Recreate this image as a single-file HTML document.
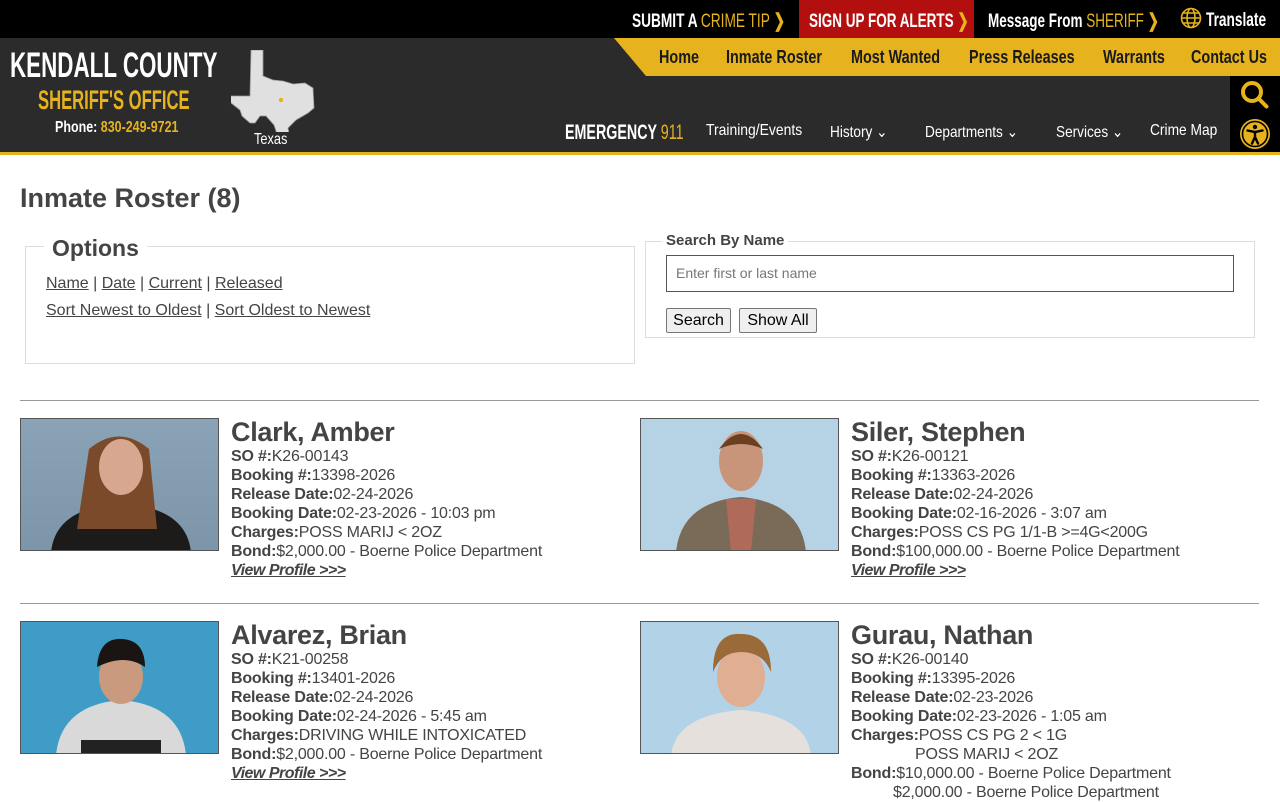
<!DOCTYPE html>
<html><head><meta charset="utf-8"><style>
*{margin:0;padding:0;box-sizing:border-box}
body{width:1280px;height:800px;overflow:hidden;background:#fff;font-family:"Liberation Sans",Arial,sans-serif;color:#444;position:relative}
.a{position:absolute;white-space:nowrap}
.c{display:inline-block;transform-origin:0 50%;font-weight:bold}
.y{color:#e6b31e}
.ent{position:absolute;width:560px}
.ent .ph{position:absolute;left:0;top:0;width:199px;height:133px;border:1px solid #555;overflow:hidden}
.ent .tx{position:absolute;left:211px;top:0;font-size:16px;line-height:19px;letter-spacing:-0.2px}
.ent h2{font-size:27px;line-height:30px;font-weight:bold;color:#444;margin-top:-1px;letter-spacing:-0.3px}
.ent b{font-weight:bold}
.ent a{font-weight:bold;font-style:italic;text-decoration:underline;color:#444;letter-spacing:-0.5px}
hr{position:absolute;left:20px;width:1239px;border:0;border-top:1px solid #999}
</style></head><body>
<!-- top bar -->
<div class="a" style="left:0;top:0;width:1280px;height:38px;background:#000"></div>
<div class="a" style="left:799px;top:0;width:175px;height:38px;background:#b40f0f"></div>
<div class="a" style="left:632px;top:10px;font-size:19px;color:#fff"><span class="c" style="transform:scaleX(.72)">SUBMIT A <span class="y" style="font-weight:normal">CRIME TIP</span> <span class="y">❯</span></span></div>
<div class="a" style="left:809px;top:10px;font-size:19px;color:#fff"><span class="c" style="transform:scaleX(.71)">SIGN UP FOR ALERTS <span class="y">❯</span></span></div>
<div class="a" style="left:988px;top:10px;font-size:19px;color:#fff"><span class="c" style="transform:scaleX(.71)">Message From <span class="y" style="font-weight:normal">SHERIFF</span> <span class="y">❯</span></span></div>
<svg class="a" style="left:1179px;top:7px" width="24" height="24" viewBox="0 0 24 24" fill="none" stroke="#e6b31e" stroke-width="1.6"><circle cx="12" cy="11" r="9.5"/><ellipse cx="12" cy="11" rx="4" ry="9.5"/><path d="M2.5 11h19M4 6h16M4 16h16"/></svg>
<div class="a" style="left:1206px;top:10px;font-size:19px;color:#fff"><span class="c" style="transform:scaleX(.72)">Translate</span></div>
<!-- header -->
<div class="a" style="left:0;top:38px;width:1280px;height:114px;background:#2b2b2b"></div>
<div class="a" style="left:0;top:152px;width:1280px;height:3px;background:#e6b31e"></div>
<svg class="a" style="left:614px;top:38px" width="666" height="38"><polygon points="0,0 666,0 666,38 32,38" fill="#e6b31e"/></svg>
<div class="a" style="left:1230px;top:76px;width:50px;height:76px;background:#000"></div>
<svg class="a" style="left:1240px;top:80px" width="30" height="30" viewBox="0 0 30 30" fill="none" stroke="#e6b31e" stroke-width="4"><circle cx="12" cy="12" r="9"/><path d="M18.5 18.5l8 8" stroke-linecap="round"/></svg>
<svg class="a" style="left:1239px;top:118px" width="32" height="32" viewBox="0 0 32 32"><circle cx="16" cy="16" r="15" fill="#e6b31e"/><circle cx="16" cy="16" r="12.5" fill="none" stroke="#000" stroke-width="1.6"/><circle cx="16" cy="9" r="2.2" fill="#000"/><path d="M8.5 12.5l7.5 1.5 7.5-1.5M16 14v5l-3 6.5M16 19l3 6.5" stroke="#000" stroke-width="2.4" fill="none" stroke-linecap="round"/></svg>
<!-- gold nav -->
<div class="a" style="left:659px;top:47px;font-size:18px;color:#1a1a1a"><span class="c" style="transform:scaleX(.8)">Home</span></div>
<div class="a" style="left:726px;top:47px;font-size:18px;color:#1a1a1a"><span class="c" style="transform:scaleX(.8)">Inmate Roster</span></div>
<div class="a" style="left:851px;top:47px;font-size:18px;color:#1a1a1a"><span class="c" style="transform:scaleX(.8)">Most Wanted</span></div>
<div class="a" style="left:969px;top:47px;font-size:18px;color:#1a1a1a"><span class="c" style="transform:scaleX(.8)">Press Releases</span></div>
<div class="a" style="left:1103px;top:47px;font-size:18px;color:#1a1a1a"><span class="c" style="transform:scaleX(.8)">Warrants</span></div>
<div class="a" style="left:1191px;top:47px;font-size:18px;color:#1a1a1a"><span class="c" style="transform:scaleX(.8)">Contact Us</span></div>
<!-- second nav -->
<div class="a" style="left:565px;top:121px;font-size:21px;color:#fff"><span class="c" style="transform:scaleX(.68)">EMERGENCY <span class="y" style="font-weight:normal">911</span></span></div>
<div class="a" style="left:706px;top:122px;font-size:16px;color:#fff"><span class="c" style="transform:scaleX(.87);font-weight:normal">Training/Events</span></div>
<div class="a" style="left:830px;top:122px;font-size:16px;color:#fff"><span class="c" style="transform:scaleX(.85);font-weight:normal">History ⌄</span></div>
<div class="a" style="left:925px;top:122px;font-size:16px;color:#fff"><span class="c" style="transform:scaleX(.85);font-weight:normal">Departments ⌄</span></div>
<div class="a" style="left:1056px;top:122px;font-size:16px;color:#fff"><span class="c" style="transform:scaleX(.85);font-weight:normal">Services ⌄</span></div>
<div class="a" style="left:1150px;top:122px;font-size:16px;color:#fff"><span class="c" style="transform:scaleX(.86);font-weight:normal">Crime Map</span></div>
<!-- logo -->
<div class="a" style="left:10px;top:46px;font-size:35px;color:#fff"><span class="c" style="transform:scaleX(.64)">KENDALL COUNTY</span></div>
<div class="a" style="left:38px;top:85px;font-size:27px;color:#e6b31e"><span class="c" style="transform:scaleX(.615)">SHERIFF'S OFFICE</span></div>
<div class="a" style="left:55px;top:119px;font-size:16px;color:#fff"><span class="c" style="transform:scaleX(.78)">Phone: <span class="y">830-249-9721</span></span></div>
<svg class="a" style="left:231px;top:50px" width="84" height="82" viewBox="0 0 84 82"><path d="M20 0h12v26l10 4 10 1 10 3 12-1 8 5 1 20-6 5-12 7-8 8 2 11-6 1-7-6-3-9-8-9-6 0-5 7-5 0-8-7-2-6-9-7-4-7h23z" fill="#e0e0e0" stroke="#999" stroke-width=".8"/><circle cx="50" cy="50" r="2.2" fill="#e6b31e"/></svg>
<div class="a" style="left:254px;top:131px;font-size:16px;color:#fff"><span class="c" style="transform:scaleX(.8);font-weight:normal">Texas</span></div>
<!-- content -->
<div class="a" style="left:20px;top:183px;font-size:27px;font-weight:bold;color:#444">Inmate Roster (8)</div>
<div class="a" style="left:25px;top:246px;width:610px;height:118px;border:1px solid #ddd"></div>
<div class="a" style="left:44px;top:235px;background:#fff;padding:0 8px;font-size:23px;font-weight:bold;color:#444">Options</div>
<div class="a" style="left:46px;top:275px;font-size:16px;color:#444"><u>Name</u> | <u>Date</u> | <u>Current</u> | <u>Released</u></div>
<div class="a" style="left:46px;top:302px;font-size:16px;color:#444"><u>Sort Newest to Oldest</u> | <u>Sort Oldest to Newest</u></div>
<div class="a" style="left:645px;top:241px;width:610px;height:97px;border:1px solid #ddd"></div>
<div class="a" style="left:662px;top:232px;background:#fff;padding:0 4px;font-size:15px;font-weight:bold;color:#444">Search By Name</div>
<div class="a" style="left:666px;top:255px;width:568px;height:37px;border:1px solid #555;font-size:14px;color:#777;padding:9px 9px">Enter first or last name</div>
<div class="a" style="left:666px;top:308px;width:65px;height:25px;border:1px solid #777;border-radius:2px;background:#efefef;font-size:16px;color:#000;text-align:center;line-height:23px">Search</div>
<div class="a" style="left:739px;top:308px;width:78px;height:25px;border:1px solid #777;border-radius:2px;background:#efefef;font-size:16px;color:#000;text-align:center;line-height:23px">Show All</div>
<hr style="top:400px"><hr style="top:603px">

<div class="ent" style="left:20px;top:418px">
<div class="ph" style="background:linear-gradient(#8aa3b6,#7c95a8)"><svg width="199" height="133"><path d="M30 133q5-45 70-48q65 3 70 48z" fill="#1d1a1a"/><path d="M68 30q30-25 60 0l8 80h-80z" fill="#7a4a2a"/><ellipse cx="100" cy="48" rx="22" ry="28" fill="#d7a88f"/></svg></div>
<div class="tx"><h2>Clark, Amber</h2><b>SO #:</b>K26-00143<br><b>Booking #:</b>13398-2026<br><b>Release Date:</b>02-24-2026<br><b>Booking Date:</b>02-23-2026 - 10:03 pm<br><b>Charges:</b>POSS MARIJ &lt; 2OZ<br><b>Bond:</b>$2,000.00 - Boerne Police Department<br><a>View Profile &gt;&gt;&gt;</a></div></div>

<div class="ent" style="left:640px;top:418px">
<div class="ph" style="background:#b6d3e6"><svg width="199" height="133"><path d="M35 133q5-50 65-55q60 5 65 55z" fill="#7a6a58"/><path d="M85 80h30l-5 53h-20z" fill="#b06a5a"/><ellipse cx="100" cy="42" rx="22" ry="30" fill="#c9957a"/><path d="M78 30q22-30 44 0q-22-10-44 0z" fill="#6b4020"/></svg></div>
<div class="tx"><h2>Siler, Stephen</h2><b>SO #:</b>K26-00121<br><b>Booking #:</b>13363-2026<br><b>Release Date:</b>02-24-2026<br><b>Booking Date:</b>02-16-2026 - 3:07 am<br><b>Charges:</b>POSS CS PG 1/1-B &gt;=4G&lt;200G<br><b>Bond:</b>$100,000.00 - Boerne Police Department<br><a>View Profile &gt;&gt;&gt;</a></div></div>

<div class="ent" style="left:20px;top:621px">
<div class="ph" style="background:#3e9cc6"><svg width="199" height="133"><path d="M35 133q5-50 65-55q60 5 65 55z" fill="#d9d9d9"/><rect x="60" y="118" width="80" height="15" fill="#222"/><ellipse cx="100" cy="55" rx="22" ry="27" fill="#c99a7e"/><path d="M76 45q2-30 26-28q22 2 22 28q-20-14-48 0z" fill="#1a1412"/></svg></div>
<div class="tx"><h2>Alvarez, Brian</h2><b>SO #:</b>K21-00258<br><b>Booking #:</b>13401-2026<br><b>Release Date:</b>02-24-2026<br><b>Booking Date:</b>02-24-2026 - 5:45 am<br><b>Charges:</b>DRIVING WHILE INTOXICATED<br><b>Bond:</b>$2,000.00 - Boerne Police Department<br><a>View Profile &gt;&gt;&gt;</a></div></div>

<div class="ent" style="left:640px;top:621px">
<div class="ph" style="background:#b2d2e8"><svg width="199" height="133"><path d="M30 133q5-40 70-45q65 5 70 45z" fill="#e6e0dc"/><ellipse cx="100" cy="55" rx="24" ry="30" fill="#e0ae92"/><path d="M72 50q0-40 28-38q30 0 30 38q-8-20-30-20q-20 0-28 20z" fill="#9a6a38"/></svg></div>
<div class="tx"><h2>Gurau, Nathan</h2><b>SO #:</b>K26-00140<br><b>Booking #:</b>13395-2026<br><b>Release Date:</b>02-23-2026<br><b>Booking Date:</b>02-23-2026 - 1:05 am<br><b>Charges:</b>POSS CS PG 2 &lt; 1G<br><span style="padding-left:64px">POSS MARIJ &lt; 2OZ</span><br><b>Bond:</b>$10,000.00 - Boerne Police Department<br><span style="padding-left:42px">$2,000.00 - Boerne Police Department</span></div></div>
</body></html>
